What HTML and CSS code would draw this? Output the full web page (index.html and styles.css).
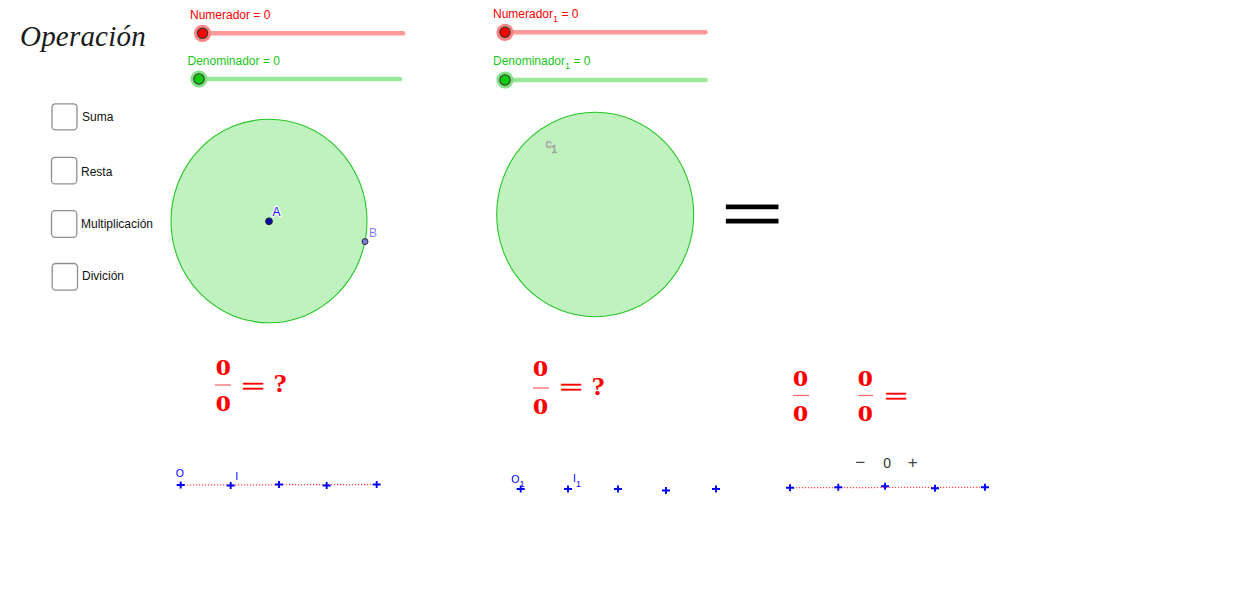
FILE: index.html
```html
<!DOCTYPE html>
<html lang="es">
<head>
<meta charset="utf-8">
<title>Operación</title>
<link rel="stylesheet" href="styles.css">
</head>
<body>
<main class="canvas">
<svg class="board" width="1251" height="605" viewBox="0 0 1251 605" xmlns="http://www.w3.org/2000/svg">
  <!-- title -->
  <text class="title" x="20" y="46">Operación</text>

  <!-- sliders -->
  <g class="slider">
    <text class="slabel red" x="190" y="18.5">Numerador = 0</text>
    <line class="track track-red" x1="203" y1="33.3" x2="403" y2="33.3"/>
    <circle class="halo halo-red" cx="202.5" cy="33.3" r="8.6"/>
    <circle class="knob knob-red" cx="202.5" cy="33.3" r="5.2"/>
  </g>
  <g class="slider">
    <text class="slabel green" x="187.5" y="64.5">Denominador = 0</text>
    <line class="track track-green" x1="199" y1="79" x2="400" y2="79"/>
    <circle class="halo halo-green" cx="199" cy="79" r="8.6"/>
    <circle class="knob knob-green" cx="199" cy="79" r="5.2"/>
  </g>
  <g class="slider">
    <text class="slabel red" x="493" y="18.3">Numerador<tspan class="sub" dy="3.6">1</tspan><tspan dy="-3.6"> = 0</tspan></text>
    <line class="track track-red" x1="505" y1="32.3" x2="705.5" y2="32.3"/>
    <circle class="halo halo-red" cx="505" cy="32.3" r="8.6"/>
    <circle class="knob knob-red" cx="505" cy="32.3" r="5.2"/>
  </g>
  <g class="slider">
    <text class="slabel green" x="493" y="65">Denominador<tspan class="sub" dy="4">1</tspan><tspan dy="-4"> = 0</tspan></text>
    <line class="track track-green" x1="505" y1="80" x2="705.5" y2="80"/>
    <circle class="halo halo-green" cx="505" cy="80" r="8.6"/>
    <circle class="knob knob-green" cx="505" cy="80" r="5.2"/>
  </g>

  <!-- checkboxes -->
  <g class="check">
    <rect class="box" x="52" y="103.8" width="25" height="26" rx="3.5"/>
    <text class="clabel" x="82" y="121">Suma</text>
  </g>
  <g class="check">
    <rect class="box" x="51.5" y="157.3" width="25.3" height="26.6" rx="3.5"/>
    <text class="clabel" x="81" y="175.8">Resta</text>
  </g>
  <g class="check">
    <rect class="box" x="51.5" y="210.7" width="25.3" height="26.6" rx="3.5"/>
    <text class="clabel" x="81" y="228">Multiplicación</text>
  </g>
  <g class="check">
    <rect class="box" x="52.2" y="263.5" width="25.3" height="26.6" rx="3.5"/>
    <text class="clabel" x="82" y="280">Divición</text>
  </g>

  <!-- circles -->
  <ellipse class="disk" cx="269" cy="221" rx="98" ry="101.8"/>
  <circle class="pt-a" cx="269" cy="221.3" r="3.4"/>
  <text class="plabel lbl-a" x="272.5" y="216">A</text>
  <circle class="pt-b" cx="365" cy="241.6" r="3"/>
  <text class="plabel lbl-b" x="369" y="236.7">B</text>

  <ellipse class="disk" cx="595.2" cy="214.5" rx="98.5" ry="102.2"/>
  <text class="plabel lbl-c" x="545.4" y="148.3">c<tspan class="csub" dy="5">1</tspan></text>

  <!-- big equals -->
  <text class="eq-big" transform="translate(721.2,237.6) scale(1.52,1)">=</text>

  <!-- fraction 1 -->
  <g class="formula">
    <text class="digit" transform="translate(223.3,374.7) scale(1.3,1)">0</text>
    <line class="fbar" x1="215" y1="385" x2="231" y2="385"/>
    <text class="digit" transform="translate(223.3,411.4) scale(1.3,1)">0</text>
    <text class="eq" transform="translate(241.3,395) scale(1.68,1)">=</text>
    <text class="qm" transform="translate(273.4,391.7) scale(1.1,1)">?</text>
  </g>
  <!-- fraction 2 -->
  <g class="formula">
    <text class="digit" transform="translate(540.5,376.4) scale(1.3,1)">0</text>
    <line class="fbar" x1="533" y1="388" x2="549" y2="388"/>
    <text class="digit" transform="translate(540.5,413.7) scale(1.3,1)">0</text>
    <text class="eq" transform="translate(559.3,396) scale(1.68,1)">=</text>
    <text class="qm" transform="translate(591.4,394.7) scale(1.1,1)">?</text>
  </g>
  <!-- fraction 3 -->
  <g class="formula">
    <text class="digit" transform="translate(800.5,385.7) scale(1.3,1)">0</text>
    <line class="fbar" x1="793" y1="395.5" x2="809" y2="395.5"/>
    <text class="digit" transform="translate(800.5,420.7) scale(1.3,1)">0</text>
    <text class="digit" transform="translate(865.2,385.7) scale(1.3,1)">0</text>
    <line class="fbar" x1="858" y1="395.5" x2="873" y2="395.5"/>
    <text class="digit" transform="translate(865.2,420.7) scale(1.3,1)">0</text>
    <text class="eq" transform="translate(884.3,404.5) scale(1.68,1)">=</text>
  </g>

  <!-- number line 1 -->
  <line class="dots" x1="181" y1="485" x2="377" y2="484.5"/>
  <path class="cross" d="M176.7 485h8M180.7 481.5v7 M226.7 485.5h8M230.7 482v7 M275 484.5h8M279 481v7 M322.7 485.5h8M326.7 482v7 M372.7 484.5h8M376.7 481v7"/>
  <text class="nlabel" x="175.8" y="477.3">O</text>
  <text class="nlabel" x="235.3" y="479.5">I</text>

  <!-- number line 2 -->
  <path class="cross" d="M516.7 489h8M520.7 485.5v7 M564 489h8M568 485.5v7 M614 489h8M618 485.5v7 M662 490.5h8M666 487v7 M712 489h8M716 485.5v7"/>
  <text class="nlabel" x="511.3" y="482.7">O<tspan class="nsub" dy="4">1</tspan></text>
  <text class="nlabel" x="573" y="482">I<tspan class="nsub" dy="5">1</tspan></text>

  <!-- number line 3 -->
  <line class="dots" x1="790" y1="487.7" x2="985" y2="487.3"/>
  <path class="cross" d="M786 487.7h8M790 484.2v7 M834.3 487.3h8M838.3 483.8v7 M881 486.3h8M885 482.8v7 M931 488.3h8M935 484.8v7 M981 487.3h8M985 483.8v7"/>
  <g class="stepper">
    <text class="step sym" x="855.3" y="468.4">−</text>
    <text class="step" x="883.3" y="467.7">0</text>
    <text class="step sym" x="907.8" y="468.4">+</text>
  </g>
</svg>
</main>
</body>
</html>
```

FILE: styles.css
```css
html, body {
  margin: 0;
  padding: 0;
  background: #ffffff;
}

.canvas {
  width: 1251px;
  height: 605px;
  overflow: hidden;
}

.board {
  display: block;
}

.title {
  font-family: "Liberation Serif", "Times New Roman", serif;
  font-style: italic;
  font-size: 29px;
  letter-spacing: 0.2px;
  fill: #1a1a1a;
}

.slabel {
  font-family: "Liberation Sans", Arial, sans-serif;
  font-size: 12px;
}

.slabel .sub {
  font-size: 9px;
}

.red { fill: #ff0000; }
.green { fill: #17c617; }

.track {
  stroke-width: 4.6;
  stroke-linecap: round;
}

.track-red { stroke: #ff9a9a; }
.track-green { stroke: #9ae89a; }

.halo-red { fill: #ff8585; }
.halo-green { fill: #85e085; }

.knob {
  stroke: #333333;
  stroke-width: 1.1;
}

.knob-red { fill: #ff0000; }
.knob-green { fill: #0fcc0f; }

.box {
  fill: #ffffff;
  stroke: #8e8e8e;
  stroke-width: 1.3;
}

.clabel {
  font-family: "Liberation Sans", Arial, sans-serif;
  font-size: 12px;
  fill: #111111;
}

.disk {
  fill: #c0f2c0;
  stroke: #27c627;
  stroke-width: 1.1;
}

.pt-a {
  fill: #0a0ab0;
  stroke: #222222;
  stroke-width: 1;
}

.pt-b {
  fill: #7878e0;
  stroke: #333333;
  stroke-width: 1;
}

.plabel {
  font-family: "Liberation Sans", Arial, sans-serif;
  font-size: 12px;
}

.lbl-a {
  fill: #1010ff;
  stroke: #ffffff;
  stroke-width: 2.5;
  paint-order: stroke;
  stroke-linejoin: round;
}

.lbl-b {
  fill: #8080ff;
}

.lbl-c {
  fill: #f4f4f4;
  stroke: #9a9a9a;
  stroke-width: 0.7;
}

.lbl-c .csub {
  font-size: 10px;
}

.eq-big {
  font-family: "Liberation Serif", "Times New Roman", serif;
  font-size: 72px;
  fill: #000000;
  stroke: #000000;
  stroke-width: 1.1;
}

.digit {
  font-family: "Liberation Serif", "Times New Roman", serif;
  font-weight: bold;
  font-size: 24px;
  fill: #ff0000;
  text-anchor: middle;
}

.fbar {
  stroke: #ff6a6a;
  stroke-width: 1.3;
}

.eq {
  font-family: "Liberation Serif", "Times New Roman", serif;
  font-size: 25px;
  fill: #ff0000;
  stroke: #ff0000;
  stroke-width: 0.45;
}

.qm {
  font-family: "Liberation Serif", "Times New Roman", serif;
  font-weight: bold;
  font-size: 25px;
  fill: #ff0000;
}

.dots {
  stroke: #ff4a4a;
  stroke-width: 1.2;
  stroke-dasharray: 1.2 1.8;
}

.cross {
  stroke: #0000ff;
  stroke-width: 1.9;
  fill: none;
}

.nlabel {
  font-family: "Liberation Sans", Arial, sans-serif;
  font-size: 10.5px;
  fill: #0000ff;
}

.nsub {
  font-size: 9px;
}

.step {
  font-family: "Liberation Sans", Arial, sans-serif;
  font-size: 14px;
  fill: #333333;
}

.step.sym {
  font-size: 17px;
  fill: #444444;
}
```
